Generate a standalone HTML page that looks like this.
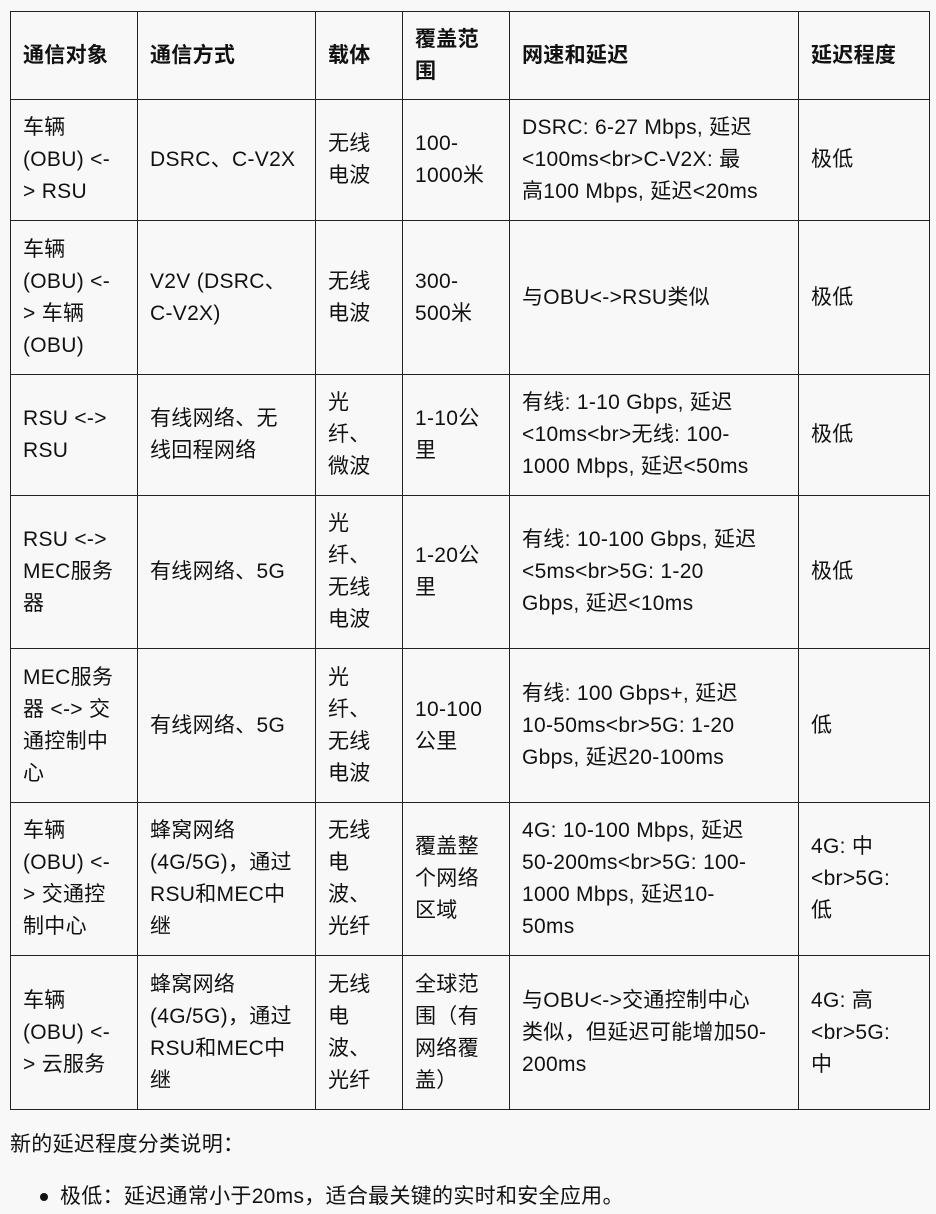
<!DOCTYPE html>
<html><head><meta charset="utf-8"><style>
body{margin:0;background:#f8f8f8;width:936px;height:1214px;overflow:hidden;font-family:"Liberation Sans","Noto Sans CJK SC",sans-serif;font-size:21px;color:#111;letter-spacing:0.3px;}
table{position:absolute;left:10px;top:11px;border-collapse:collapse;table-layout:fixed;}
td,th{border:1px solid #222;padding:0 0 0 12px;line-height:32px;vertical-align:middle;text-align:left;white-space:nowrap;overflow:hidden;}
th{font-weight:bold;}
.p{position:absolute;left:10px;top:1129px;line-height:32px;}
.b{position:absolute;left:60px;top:1181px;line-height:32px;}
.d{position:absolute;left:40px;top:1193px;width:8px;height:8px;border-radius:50%;background:#111;}
</style></head><body>
<table>
<colgroup><col style="width:127px"><col style="width:178px"><col style="width:87px"><col style="width:107px"><col style="width:289px"><col style="width:131px"></colgroup>
<tr style="height:88px"><th>通信对象</th><th>通信方式</th><th>载体</th><th>覆盖范<br>围</th><th>网速和延迟</th><th>延迟程度</th></tr>
<tr style="height:121px"><td>车辆<br>(OBU) &lt;-<br>&gt; RSU</td><td>DSRC、C-V2X</td><td>无线<br>电波</td><td>100-<br>1000米</td><td>DSRC: 6-27 Mbps, 延迟<br>&lt;100ms&lt;br&gt;C-V2X: 最<br>高100 Mbps, 延迟&lt;20ms</td><td>极低</td></tr>
<tr style="height:154px"><td>车辆<br>(OBU) &lt;-<br>&gt; 车辆<br>(OBU)</td><td>V2V (DSRC、<br>C-V2X)</td><td>无线<br>电波</td><td>300-<br>500米</td><td>与OBU&lt;-&gt;RSU类似</td><td>极低</td></tr>
<tr style="height:121px"><td>RSU &lt;-&gt;<br>RSU</td><td>有线网络、无<br>线回程网络</td><td>光<br>纤、<br>微波</td><td>1-10公<br>里</td><td>有线: 1-10 Gbps, 延迟<br>&lt;10ms&lt;br&gt;无线: 100-<br>1000 Mbps, 延迟&lt;50ms</td><td>极低</td></tr>
<tr style="height:153px"><td>RSU &lt;-&gt;<br>MEC服务<br>器</td><td>有线网络、5G</td><td>光<br>纤、<br>无线<br>电波</td><td>1-20公<br>里</td><td>有线: 10-100 Gbps, 延迟<br>&lt;5ms&lt;br&gt;5G: 1-20<br>Gbps, 延迟&lt;10ms</td><td>极低</td></tr>
<tr style="height:154px"><td>MEC服务<br>器 &lt;-&gt; 交<br>通控制中<br>心</td><td>有线网络、5G</td><td>光<br>纤、<br>无线<br>电波</td><td>10-100<br>公里</td><td>有线: 100 Gbps+, 延迟<br>10-50ms&lt;br&gt;5G: 1-20<br>Gbps, 延迟20-100ms</td><td>低</td></tr>
<tr style="height:153px"><td>车辆<br>(OBU) &lt;-<br>&gt; 交通控<br>制中心</td><td>蜂窝网络<br>(4G/5G)，通过<br>RSU和MEC中<br>继</td><td>无线<br>电<br>波、<br>光纤</td><td>覆盖整<br>个网络<br>区域</td><td>4G: 10-100 Mbps, 延迟<br>50-200ms&lt;br&gt;5G: 100-<br>1000 Mbps, 延迟10-<br>50ms</td><td>4G: 中<br>&lt;br&gt;5G:<br>低</td></tr>
<tr style="height:154px"><td>车辆<br>(OBU) &lt;-<br>&gt; 云服务</td><td>蜂窝网络<br>(4G/5G)，通过<br>RSU和MEC中<br>继</td><td>无线<br>电<br>波、<br>光纤</td><td>全球范<br>围（有<br>网络覆<br>盖）</td><td>与OBU&lt;-&gt;交通控制中心<br>类似，但延迟可能增加50-<br>200ms</td><td>4G: 高<br>&lt;br&gt;5G:<br>中</td></tr>
</table>
<div class="p">新的延迟程度分类说明：</div>
<div class="d"></div>
<div class="b">极低：延迟通常小于20ms，适合最关键的实时和安全应用。</div>
</body></html>
